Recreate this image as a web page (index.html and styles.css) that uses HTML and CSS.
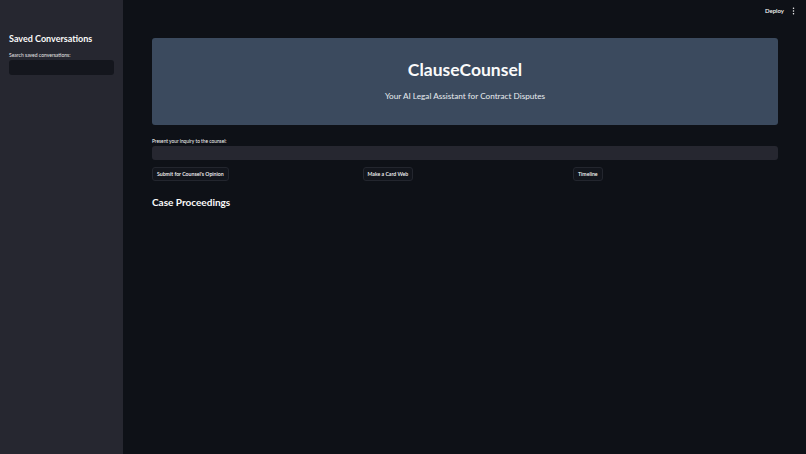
FILE: index.html
```html
<!DOCTYPE html>
<html>
<head>
<meta charset="utf-8">
<link rel="stylesheet" href="styles.css">
</head>
<body>
<div class="app">
  <aside class="sidebar">
    <h2 class="side-title">Saved Conversations</h2>
    <label class="side-label">Search saved conversations:</label>
    <div class="side-input"></div>
  </aside>
  <main class="main">
    <header class="topbar">
      <span class="deploy">Deploy</span>
      <svg class="kebab" width="3" height="8" viewBox="0 0 3 8"><circle cx="1.5" cy="1.2" r="0.75" fill="#fafafa"/><circle cx="1.5" cy="4" r="0.75" fill="#fafafa"/><circle cx="1.5" cy="6.8" r="0.75" fill="#fafafa"/></svg>
    </header>
    <section class="content">
      <div class="banner">
        <h1 class="title">ClauseCounsel</h1>
        <p class="subtitle">Your AI Legal Assistant for Contract Disputes</p>
      </div>
      <label class="label">Present your inquiry to the counsel:</label>
      <div class="input"></div>
      <div class="buttons">
        <div class="col"><button class="btn">Submit for Counsel's Opinion</button></div>
        <div class="col"><button class="btn">Make a Card Web</button></div>
        <div class="col"><button class="btn">Timeline</button></div>
      </div>
      <h3 class="section">Case Proceedings</h3>
    </section>
  </main>
</div>
</body>
</html>
```
FILE: styles.css
```css
* { box-sizing: border-box; }
html, body { margin: 0; padding: 0; height: 100%; }
body {
  background: #0e1117;
  color: #fafafa;
  font-family: Lato, "Open Sans", sans-serif;
}
.app { display: flex; height: 454px; }
.sidebar {
  width: 123px;
  flex: none;
  background: #262730;
  padding: 32px 9px 0 9px;
}
.side-title {
  margin: 0;
  font-size: 9px;
  font-weight: 700;
  line-height: 14px;
}
.side-label {
  display: block;
  margin-top: 6px;
  font-size: 5px;
  line-height: 7px;
  color: #e6e6e6;
}
.side-input {
  margin-top: 1px;
  height: 15px;
  background: #14161d;
  border-radius: 3px;
}
.main { flex: 1; display: flex; flex-direction: column; }
.topbar {
  height: 21px;
  display: flex;
  justify-content: flex-end;
  align-items: center;
  gap: 8px;
  padding-right: 11px;
}
.deploy { font-size: 6px; font-weight: 600; color: #fafafa; }
.kebab { display: block; }
.content {
  padding: 17px 28px 0 29px;
}
.banner {
  background: #3b4a5e;
  border-radius: 3px;
  height: 87px;
  display: flex;
  flex-direction: column;
  align-items: center;
  padding-top: 21px;
}
.title {
  margin: 0;
  font-size: 17.5px;
  font-weight: 700;
  line-height: 22px;
}
.subtitle {
  margin: 9px 0 0;
  font-size: 8.2px;
  line-height: 12px;
  color: #e8ecf0;
}
.label {
  display: block;
  margin-top: 12px;
  font-size: 4.8px;
  line-height: 8px;
  color: #fafafa;
}
.input {
  margin-top: 1px;
  height: 14px;
  background: #262730;
  border-radius: 3px;
}
.buttons {
  display: grid;
  grid-template-columns: repeat(3, 1fr);
  gap: 5.5px;
  margin-top: 7px;
}
.col { display: flex; }
.btn {
  display: block;
  background: #12151c;
  border: 1px solid #23262e;
  border-radius: 3px;
  color: #fafafa;
  font-family: Lato, "Open Sans", sans-serif;
  font-size: 5.2px;
  font-weight: 600;
  height: 14px;
  padding: 0 4px;
}
.section {
  margin: 15px 0 0;
  font-size: 10px;
  font-weight: 700;
  line-height: 13px;
}
```
